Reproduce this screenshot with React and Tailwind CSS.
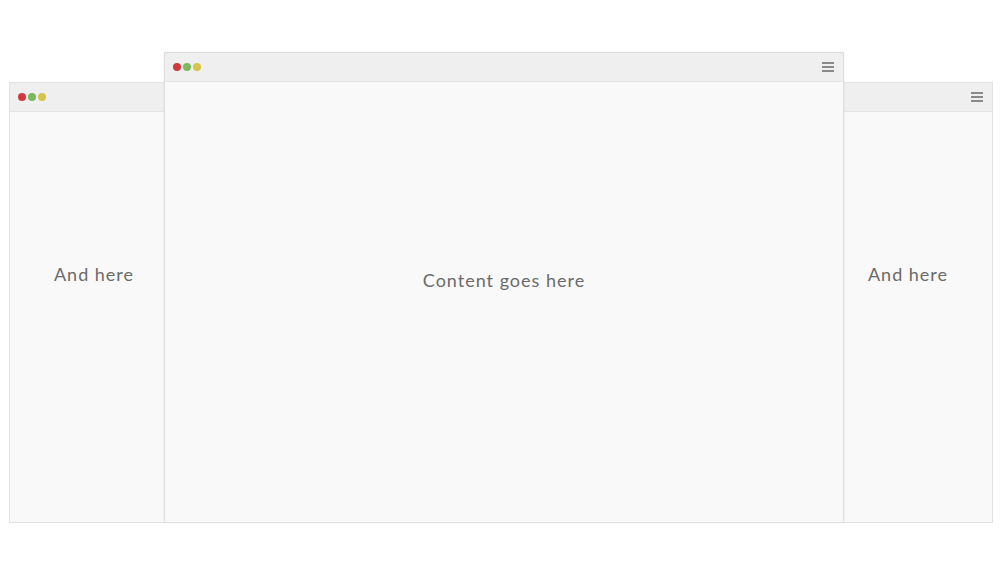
export default function App() {
  const Dots = () => (
    <div className="flex items-center gap-[2px]">
      <span className="w-[8px] h-[8px] rounded-full bg-[#d1393d]" />
      <span className="w-[8px] h-[8px] rounded-full bg-[#7cb95d]" />
      <span className="w-[8px] h-[8px] rounded-full bg-[#d6c44a]" />
    </div>
  );
  const Burger = () => (
    <div className="flex flex-col gap-[2px] w-[12px]">
      <span className="h-[2px] bg-[#8a8a8a]" />
      <span className="h-[2px] bg-[#8a8a8a]" />
      <span className="h-[2px] bg-[#8a8a8a]" />
    </div>
  );
  const Bar = ({ burger }) => (
    <div className="h-[29px] bg-[#eeefee] border-b border-[#e3e3e3] flex items-center justify-between pl-[8px] pr-[9px] shrink-0">
      <Dots />
      {burger ? <Burger /> : <span />}
    </div>
  );
  const textCls = "text-[18px] font-normal tracking-[1px] text-[#6a6a6a]";
  return (
    <div
      className="w-[1000px] h-[565px] bg-white flex items-start"
      style={{ fontFamily: "Lato, 'Open Sans', sans-serif" }}
    >
      <div className="ml-[9px] mt-[82px] w-[300px] h-[441px] border border-[#e2e2e2] bg-[#f9f9f9] flex flex-col relative z-0">
        <Bar />
        <div className={"pt-[149px] w-[168px] text-center " + textCls}>And here</div>
      </div>
      <div className="-ml-[145px] mt-[52px] w-[680px] h-[471px] border border-[#dedede] bg-[#f9f9f9] flex flex-col relative z-10 shadow-[0_0_2px_rgba(0,0,0,0.08)]">
        <Bar burger />
        <div className={"pt-[185px] text-center " + textCls}>Content goes here</div>
      </div>
      <div className="-ml-[151px] mt-[82px] w-[300px] h-[441px] border border-[#e2e2e2] bg-[#f9f9f9] flex flex-col relative z-0">
        <Bar burger />
        <div className="flex justify-end">
          <div className={"pt-[149px] w-[172px] pl-[4px] text-center " + textCls}>And here</div>
        </div>
      </div>
    </div>
  );
}
